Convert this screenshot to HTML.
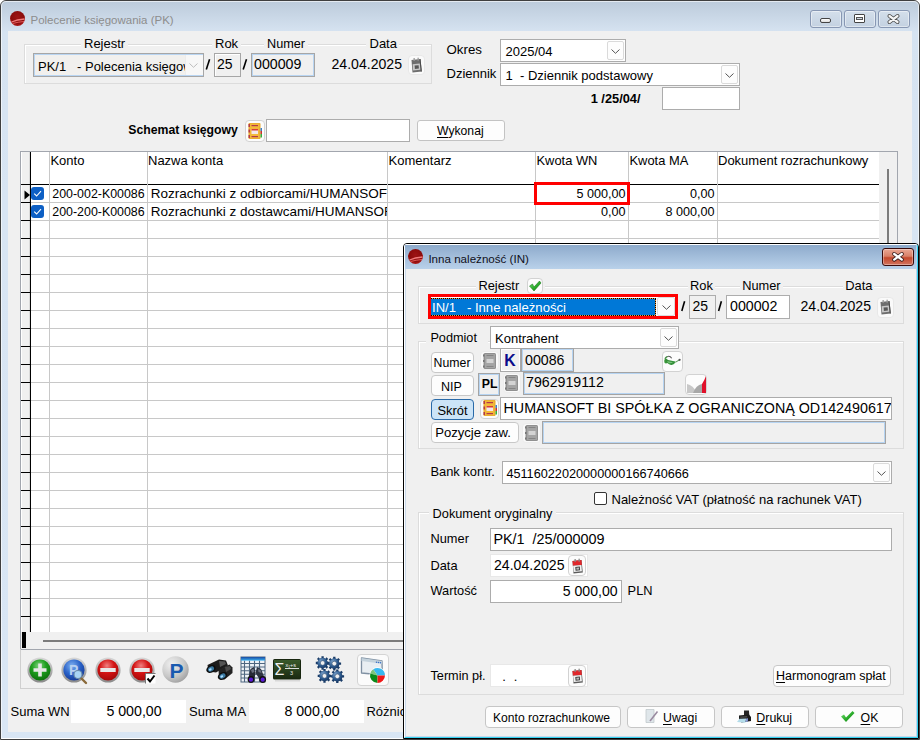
<!DOCTYPE html>
<html><head><meta charset="utf-8">
<style>
*{margin:0;padding:0;box-sizing:border-box}
html,body{width:921px;height:740px;overflow:hidden;background:#fff;font-family:"Liberation Sans",sans-serif;color:#000}
.a{position:absolute}
svg.a{overflow:visible}
.t{position:absolute;white-space:nowrap;line-height:1;font-size:13px}
.b{font-weight:bold}
.u{text-decoration:underline;text-underline-offset:2px}
</style></head><body>
<div class="a" style="left:0px;top:0px;width:920px;height:740px;border:1px solid #3f3f3f;border-radius:6px 6px 0 0;background:linear-gradient(#bccbdb,#d6e3f1 31px,#d8e5f3 200px,#d9e6f4)"></div>
<div class="a" style="left:1px;top:1px;width:918px;height:738px;border:1px solid rgba(255,255,255,.6);border-bottom-color:#fff;border-radius:5px 5px 0 0"></div>
<svg class="a" style="left:10px;top:11px" width="16" height="16" viewBox="0 0 16 16"><defs><radialGradient id="rg1" cx="50%" cy="40%" r="60%"><stop offset="0" stop-color="#9e1414"/><stop offset=".7" stop-color="#8a0c0c"/><stop offset="1" stop-color="#b01c1c"/></radialGradient></defs><circle cx="7.5" cy="7.5" r="7.5" fill="url(#rg1)"/><path d="M1.5 11 Q7 8.5 14.5 8" stroke="#f07a7a" stroke-width="1.3" fill="none"/><path d="M2.5 12.5 Q8 11 14 10.5" stroke="#e05a5a" stroke-width="1" fill="none"/></svg>
<div class="t " style="left:30.5px;top:15.00px;font-size:11.5px;color:#8d8d8d">Polecenie księgowania (PK)</div>
<div class="a" style="left:810px;top:10px;width:32px;height:18px;border:1px solid #8797b3;border-radius:3px;background:linear-gradient(#d4dfeb,#c3d1e1);box-shadow:inset 0 0 0 1px rgba(255,255,255,.45)"></div>
<div class="a" style="left:844px;top:10px;width:32px;height:18px;border:1px solid #8797b3;border-radius:3px;background:linear-gradient(#d4dfeb,#c3d1e1);box-shadow:inset 0 0 0 1px rgba(255,255,255,.45)"></div>
<div class="a" style="left:878px;top:10px;width:32px;height:18px;border:1px solid #8797b3;border-radius:3px;background:linear-gradient(#d4dfeb,#c3d1e1);box-shadow:inset 0 0 0 1px rgba(255,255,255,.45)"></div>
<div class="a" style="left:820px;top:18px;width:11px;height:5px;border:1px solid #444;border-radius:2px;background:linear-gradient(#fff,#ddd)"></div>
<div class="a" style="left:854px;top:14px;width:11px;height:9px;border:1px solid #444;border-radius:1px;background:#fff"></div>
<div class="a" style="left:856px;top:17px;width:7px;height:3px;border:1px solid #555;background:#cfd8e4"></div>
<svg class="a" style="left:887px;top:14px" width="13" height="10" viewBox="0 0 13 10"><path d="M2.5 2 L10.5 8 M10.5 2 L2.5 8" stroke="#444" stroke-width="4" stroke-linecap="round"/><path d="M2.5 2 L10.5 8 M10.5 2 L2.5 8" stroke="#f4f4f4" stroke-width="2.3" stroke-linecap="round"/></svg>
<div class="a" style="left:8px;top:31px;width:904px;height:701px;background:#f0f0f0"></div>
<div class="a" style="left:24px;top:44px;width:408px;height:40px;border:1px solid #dcdcdc;box-shadow:inset 1px 1px 0 #fff"></div>
<div class="a" style="left:81px;top:40px;width:47px;height:8px;background:#f0f0f0"></div>
<div class="a" style="left:212px;top:40px;width:29px;height:8px;background:#f0f0f0"></div>
<div class="a" style="left:264px;top:40px;width:44px;height:8px;background:#f0f0f0"></div>
<div class="a" style="left:366px;top:40px;width:33px;height:8px;background:#f0f0f0"></div>
<div class="t " style="left:84px;top:37.00px;font-size:13px;">Rejestr</div>
<div class="t " style="left:215px;top:37.00px;font-size:13px;">Rok</div>
<div class="t " style="left:267px;top:38.00px;font-size:12.7px;">Numer</div>
<div class="t " style="left:369.5px;top:37.00px;font-size:13px;">Data</div>
<div class="a" style="left:33px;top:53px;width:171px;height:24px;border:1px solid #a6a6a6;box-shadow:inset 0 0 0 1px #b9d5f2;background:#f1f0ee;overflow:hidden"><div class="t" style="left:4px;top:5.8px;font-size:13px">PK/1&nbsp;&nbsp;&nbsp;- Polecenia księgowania</div><div class="a" style="left:151px;top:1px;width:18px;height:20px;background:#f7f7f7;border-left:1px solid #ececec"></div></div>
<svg class="a" style="left:188px;top:62px" width="11" height="7"><path d="M1.5 1.5 L5.5 5.3 L9.5 1.5" fill="none" stroke="#bdbdbd" stroke-width="1"/></svg>
<svg class="a" style="left:0;top:0" width="1" height="1"><path d="M206.3 69.5 L209.6 59.3" stroke="#000" stroke-width="1.6" stroke-linecap="butt"/></svg>
<div class="a" style="left:214px;top:53px;width:27px;height:24px;border:1px solid #a6a6a6;box-shadow:inset 1px 1px 0 #fff;background:#f0f0f0"></div>
<div class="t " style="left:217px;top:57.00px;font-size:14px;">25</div>
<svg class="a" style="left:0;top:0" width="1" height="1"><path d="M243.2 69.5 L246.5 59.3" stroke="#000" stroke-width="1.6" stroke-linecap="butt"/></svg>
<div class="a" style="left:251px;top:53px;width:64px;height:24px;border:1px solid #a6a6a6;box-shadow:inset 0 0 0 1px #b9d5f2;background:#f0f0f0"></div>
<div class="t " style="left:254px;top:57.00px;font-size:14.2px;">000009</div>
<div class="t " style="left:331.5px;top:57.00px;font-size:14.1px;">24.04.2025</div>
<div class="a" style="left:408px;top:55px;width:17px;height:20px;background:#fafafa;border:1px solid #e8e8e8;border-radius:4px"></div>
<svg class="a" style="left:411px;top:58px" width="12" height="15" viewBox="0 0 12 15"><path d="M0.5 2 L9.5 1 L10.8 13.5 L1.5 14.5 Z" fill="#6e6e6e"/><path d="M9.5 1 L10.8 13.5 L9.8 13.6 L8.6 1.2 Z" fill="#4a4a4a"/><path d="M1.6 6.3 L8.8 5.6 L9.3 11.8 L2.1 12.5 Z" fill="#c8c8c8"/><path d="M3.6 7.6 L7.6 7.2 L7.9 10.6 L3.9 11 Z" fill="#585858"/><rect x="2.5" y="0" width="1.3" height="3" fill="#9a9a9a"/><rect x="6.5" y="-0.3" width="1.3" height="3" fill="#9a9a9a"/></svg>
<div class="t " style="left:446.5px;top:43.00px;font-size:13.3px;">Okres</div>
<div class="t " style="left:446.5px;top:67.00px;font-size:13px;">Dziennik</div>
<div class="a" style="left:500px;top:39px;width:126px;height:23px;border:1px solid #acacac;background:#fff"></div>
<div class="t " style="left:505.5px;top:45.00px;font-size:13px;">2025/04</div>
<div class="a" style="left:607px;top:41px;width:17px;height:19px;background:#fdfdfd;border:1px solid #dadada;border-radius:2px"></div>
<svg class="a" style="left:610px;top:48px" width="11" height="7"><path d="M1.5 1.5 L5.5 5.3 L9.5 1.5" fill="none" stroke="#555" stroke-width="1.0"/></svg>
<div class="a" style="left:500px;top:63px;width:240px;height:23px;border:1px solid #acacac;background:#fff"></div>
<div class="t " style="left:505.5px;top:69.00px;font-size:13px;">1&nbsp;&nbsp;- Dziennik podstawowy</div>
<div class="a" style="left:721px;top:65px;width:17px;height:19px;background:#fdfdfd;border:1px solid #dadada;border-radius:2px"></div>
<svg class="a" style="left:724px;top:72px" width="11" height="7"><path d="M1.5 1.5 L5.5 5.3 L9.5 1.5" fill="none" stroke="#555" stroke-width="1.0"/></svg>
<div class="t b" style="left:590.7px;top:93.00px;font-size:12.8px;">1 /25/04/</div>
<div class="a" style="left:662px;top:87px;width:78px;height:23px;border:1px solid #acacac;background:#fff"></div>
<div class="t b" style="left:128.3px;top:124.00px;font-size:12.25px;">Schemat księgowy</div>
<div class="a" style="left:245px;top:120px;width:20px;height:22px;background:#fcfcfc;border:1px solid #d2d2d2;border-radius:4px"></div>
<svg class="a" style="left:248px;top:123px" width="14" height="16" viewBox="0 0 14 16"><rect x="0.5" y="0" width="12" height="16" rx="1" fill="#e5a52a"/><rect x="1.5" y="0.5" width="10" height="15" fill="#f2b838"/><rect x="3.5" y="6" width="6.5" height="5" fill="#f4e8e8"/><rect x="3.5" y="6" width="6.5" height="1.5" fill="#d83a3a"/><rect x="3.5" y="2" width="6.5" height="1.2" fill="#b2394a"/><rect x="3.5" y="13" width="6.5" height="1.2" fill="#b2394a"/><rect x="0.5" y="1" width="1.5" height="3" fill="#b2394a"/><rect x="0.5" y="6.5" width="1.5" height="3" fill="#b2394a"/><rect x="0.5" y="12" width="1.5" height="3" fill="#b2394a"/><rect x="12.5" y="5" width="1.5" height="3" fill="#3a7ec8"/><rect x="12.5" y="8" width="1.5" height="3" fill="#c83030"/><rect x="12.5" y="11" width="1.5" height="3.5" fill="#30b040"/></svg>
<div class="a" style="left:266px;top:119px;width:144px;height:23px;border:1px solid #acacac;background:#fff"></div>
<div class="a" style="left:417px;top:120px;width:88px;height:21px;background:#fdfdfd;border:1px solid #c3c3c3;border-radius:3px"></div>
<div class="t " style="left:437px;top:125.00px;font-size:12.2px;"><span class="u">W</span>ykonaj</div>
<div class="a" style="left:20px;top:151px;width:878px;height:499px;border:1px solid #a2a6ae;background:#fff"></div>
<div class="a" style="left:21px;top:152px;width:9px;height:480px;background:#f0f0f0;border-left:1px solid #fff"></div>
<div class="a" style="left:29px;top:152px;width:1px;height:480px;background:#dadada"></div>
<div class="a" style="left:30px;top:152px;width:1px;height:480px;background:#000"></div>
<div class="a" style="left:21px;top:184px;width:858px;height:1px;background:#000"></div>
<div class="a" style="left:31px;top:202px;width:848px;height:1px;background:#c8c8c8"></div>
<div class="a" style="left:21px;top:202px;width:9px;height:1px;background:#000"></div>
<div class="a" style="left:31px;top:220px;width:848px;height:1px;background:#c8c8c8"></div>
<div class="a" style="left:21px;top:220px;width:9px;height:1px;background:#000"></div>
<div class="a" style="left:31px;top:238px;width:848px;height:1px;background:#c8c8c8"></div>
<div class="a" style="left:21px;top:238px;width:9px;height:1px;background:#000"></div>
<div class="a" style="left:31px;top:256px;width:848px;height:1px;background:#c8c8c8"></div>
<div class="a" style="left:21px;top:256px;width:9px;height:1px;background:#000"></div>
<div class="a" style="left:31px;top:274px;width:848px;height:1px;background:#c8c8c8"></div>
<div class="a" style="left:21px;top:274px;width:9px;height:1px;background:#000"></div>
<div class="a" style="left:31px;top:292px;width:848px;height:1px;background:#c8c8c8"></div>
<div class="a" style="left:21px;top:292px;width:9px;height:1px;background:#000"></div>
<div class="a" style="left:31px;top:310px;width:848px;height:1px;background:#c8c8c8"></div>
<div class="a" style="left:21px;top:310px;width:9px;height:1px;background:#000"></div>
<div class="a" style="left:31px;top:328px;width:848px;height:1px;background:#c8c8c8"></div>
<div class="a" style="left:21px;top:328px;width:9px;height:1px;background:#000"></div>
<div class="a" style="left:31px;top:346px;width:848px;height:1px;background:#c8c8c8"></div>
<div class="a" style="left:21px;top:346px;width:9px;height:1px;background:#000"></div>
<div class="a" style="left:31px;top:364px;width:848px;height:1px;background:#c8c8c8"></div>
<div class="a" style="left:21px;top:364px;width:9px;height:1px;background:#000"></div>
<div class="a" style="left:31px;top:382px;width:848px;height:1px;background:#c8c8c8"></div>
<div class="a" style="left:21px;top:382px;width:9px;height:1px;background:#000"></div>
<div class="a" style="left:31px;top:400px;width:848px;height:1px;background:#c8c8c8"></div>
<div class="a" style="left:21px;top:400px;width:9px;height:1px;background:#000"></div>
<div class="a" style="left:31px;top:418px;width:848px;height:1px;background:#c8c8c8"></div>
<div class="a" style="left:21px;top:418px;width:9px;height:1px;background:#000"></div>
<div class="a" style="left:31px;top:436px;width:848px;height:1px;background:#c8c8c8"></div>
<div class="a" style="left:21px;top:436px;width:9px;height:1px;background:#000"></div>
<div class="a" style="left:31px;top:454px;width:848px;height:1px;background:#c8c8c8"></div>
<div class="a" style="left:21px;top:454px;width:9px;height:1px;background:#000"></div>
<div class="a" style="left:31px;top:472px;width:848px;height:1px;background:#c8c8c8"></div>
<div class="a" style="left:21px;top:472px;width:9px;height:1px;background:#000"></div>
<div class="a" style="left:31px;top:490px;width:848px;height:1px;background:#c8c8c8"></div>
<div class="a" style="left:21px;top:490px;width:9px;height:1px;background:#000"></div>
<div class="a" style="left:31px;top:508px;width:848px;height:1px;background:#c8c8c8"></div>
<div class="a" style="left:21px;top:508px;width:9px;height:1px;background:#000"></div>
<div class="a" style="left:31px;top:526px;width:848px;height:1px;background:#c8c8c8"></div>
<div class="a" style="left:21px;top:526px;width:9px;height:1px;background:#000"></div>
<div class="a" style="left:31px;top:544px;width:848px;height:1px;background:#c8c8c8"></div>
<div class="a" style="left:21px;top:544px;width:9px;height:1px;background:#000"></div>
<div class="a" style="left:31px;top:562px;width:848px;height:1px;background:#c8c8c8"></div>
<div class="a" style="left:21px;top:562px;width:9px;height:1px;background:#000"></div>
<div class="a" style="left:31px;top:580px;width:848px;height:1px;background:#c8c8c8"></div>
<div class="a" style="left:21px;top:580px;width:9px;height:1px;background:#000"></div>
<div class="a" style="left:31px;top:598px;width:848px;height:1px;background:#c8c8c8"></div>
<div class="a" style="left:21px;top:598px;width:9px;height:1px;background:#000"></div>
<div class="a" style="left:31px;top:616px;width:848px;height:1px;background:#c8c8c8"></div>
<div class="a" style="left:21px;top:616px;width:9px;height:1px;background:#000"></div>
<div class="a" style="left:49px;top:152px;width:1px;height:480px;background:#c8c8c8"></div>
<div class="a" style="left:147px;top:152px;width:1px;height:480px;background:#c8c8c8"></div>
<div class="a" style="left:387px;top:152px;width:1px;height:480px;background:#c8c8c8"></div>
<div class="a" style="left:535px;top:152px;width:1px;height:480px;background:#c8c8c8"></div>
<div class="a" style="left:628px;top:152px;width:1px;height:480px;background:#c8c8c8"></div>
<div class="a" style="left:717px;top:152px;width:1px;height:480px;background:#c8c8c8"></div>
<div class="a" style="left:879px;top:152px;width:18px;height:480px;background:#f0f0f0"></div>
<div class="a" style="left:887px;top:169px;width:2px;height:463px;background:#7c7c7c"></div>
<div class="a" style="left:21px;top:632px;width:876px;height:17px;background:#f0f0f0"></div>
<div class="a" style="left:22px;top:632px;width:4px;height:16px;background:#000"></div>
<div class="a" style="left:43px;top:640px;width:854px;height:2px;background:#7c7c7c"></div>
<div class="t " style="left:50.4px;top:154.00px;font-size:13px;">Konto</div>
<div class="t " style="left:148px;top:154.00px;font-size:13px;">Nazwa konta</div>
<div class="t " style="left:388.6px;top:154.00px;font-size:13px;">Komentarz</div>
<div class="t " style="left:536.5px;top:155.00px;font-size:12.9px;">Kwota WN</div>
<div class="t " style="left:629.5px;top:155.00px;font-size:12.9px;">Kwota MA</div>
<div class="t " style="left:718px;top:154.00px;font-size:13px;">Dokument rozrachunkowy</div>
<div class="a" style="left:31px;top:187px;width:13px;height:13px;border-radius:3px;background:#0d5fc4"></div>
<svg class="a" style="left:31px;top:187px" width="13" height="13" viewBox="0 0 13 13"><path d="M3.2 6.6 L5.6 9 L10 4.2" fill="none" stroke="#fff" stroke-width="1.1"/></svg>
<div class="t " style="left:52.3px;top:188.00px;font-size:12.4px;">200-002-K00086</div>
<div class="a" style="left:148px;top:184px;width:239px;height:18px;overflow:hidden"><div class="t" style="left:2.7px;top:3px;font-size:13.5px">Rozrachunki z odbiorcami/HUMANSOFT BI</div></div>
<div class="t" style="left:536px;top:188px;width:89.5px;text-align:right;font-size:12.6px">5 000,00</div>
<div class="t" style="left:629px;top:188px;width:85.6px;text-align:right;font-size:12.6px">0,00</div>
<div class="a" style="left:31px;top:205px;width:13px;height:13px;border-radius:3px;background:#0d5fc4"></div>
<svg class="a" style="left:31px;top:205px" width="13" height="13" viewBox="0 0 13 13"><path d="M3.2 6.6 L5.6 9 L10 4.2" fill="none" stroke="#fff" stroke-width="1.1"/></svg>
<div class="t " style="left:52.3px;top:206.00px;font-size:12.4px;">200-200-K00086</div>
<div class="a" style="left:148px;top:202px;width:239px;height:18px;overflow:hidden"><div class="t" style="left:2.7px;top:3px;font-size:13.5px">Rozrachunki z dostawcami/HUMANSOFT BI</div></div>
<div class="t" style="left:536px;top:206px;width:89.5px;text-align:right;font-size:12.6px">0,00</div>
<div class="t" style="left:629px;top:206px;width:85.6px;text-align:right;font-size:12.6px">8 000,00</div>
<svg class="a" style="left:24px;top:190px" width="7" height="10" viewBox="0 0 7 10"><path d="M0.5 0.5 L6 5 L0.5 9.5 Z" fill="#000"/></svg>
<div class="a" style="left:534px;top:182px;width:96px;height:23px;border:3px solid #ff0000"></div>
<div class="a" style="left:20px;top:649px;width:878px;height:40px;border:1px solid #cfcfcf;border-top:none"></div>
<svg class="a" style="left:27px;top:657px" width="26" height="26" viewBox="0 0 26 26"><defs><radialGradient id="gp" cx="45%" cy="30%" r="75%"><stop offset="0" stop-color="#7fd47f"/><stop offset=".45" stop-color="#1e9e1e"/><stop offset="1" stop-color="#0a6a0a"/></radialGradient><linearGradient id="ring" x1="0" y1="0" x2="0" y2="1"><stop offset="0" stop-color="#d8d8d8"/><stop offset="1" stop-color="#8a8a8a"/></linearGradient></defs><circle cx="13" cy="13" r="12.6" fill="url(#ring)"/><circle cx="13" cy="13" r="10.6" fill="url(#gp)"/><path d="M13 6.5 V19.5 M6.5 13 H19.5" stroke="#e6e6e6" stroke-width="3.6"/></svg>
<svg class="a" style="left:61px;top:657px" width="28" height="28" viewBox="0 0 28 28"><defs><radialGradient id="bp" cx="40%" cy="30%" r="80%"><stop offset="0" stop-color="#7fb0f0"/><stop offset=".5" stop-color="#2a62c8"/><stop offset="1" stop-color="#10308a"/></radialGradient></defs><circle cx="13" cy="13" r="12.6" fill="url(#ring)"/><circle cx="13" cy="13" r="10.6" fill="url(#bp)"/><text x="8" y="18" font-family="Liberation Sans" font-weight="bold" font-size="14" fill="#b8d0f0">P</text><path d="M19 20 L25 26" stroke="#8a6a3a" stroke-width="2.4" stroke-linecap="round"/><circle cx="17" cy="17.5" r="4" fill="#a8d4f4" stroke="#6a8aa8" stroke-width="1.2"/></svg>
<svg class="a" style="left:95px;top:657px" width="26" height="26" viewBox="0 0 26 26"><defs><radialGradient id="rm" cx="45%" cy="30%" r="75%"><stop offset="0" stop-color="#f08080"/><stop offset=".45" stop-color="#d41414"/><stop offset="1" stop-color="#a00808"/></radialGradient></defs><circle cx="13" cy="13" r="12.6" fill="url(#ring)"/><circle cx="13" cy="13" r="10.6" fill="url(#rm)"/><rect x="5.3" y="11" width="15.4" height="4" fill="#e8e8e8"/></svg>
<svg class="a" style="left:129px;top:657px" width="28" height="28" viewBox="0 0 28 28"><circle cx="13" cy="13" r="12.6" fill="url(#ring)"/><circle cx="13" cy="13" r="10.6" fill="url(#rm)"/><rect x="5.3" y="11" width="15.4" height="4" fill="#e8e8e8"/><path d="M16.5 26.5 V16.5 H26.5" fill="none" stroke="#777" stroke-width="1"/><rect x="17" y="17" width="9.5" height="9.5" fill="#fff"/><path d="M18.5 21.5 L21 24.5 L25.5 18.5" fill="none" stroke="#000" stroke-width="2"/></svg>
<svg class="a" style="left:162px;top:656px" width="27" height="27" viewBox="0 0 27 27"><defs><radialGradient id="gg" cx="35%" cy="30%" r="80%"><stop offset="0" stop-color="#f0f0f0"/><stop offset=".6" stop-color="#c8c8c8"/><stop offset="1" stop-color="#9a9a9a"/></radialGradient></defs><circle cx="13.5" cy="13.5" r="13.2" fill="url(#gg)"/><text x="7.5" y="21.5" font-family="Liberation Sans" font-weight="bold" font-size="21" fill="#1a5ab0">P</text></svg>
<svg class="a" style="left:205px;top:659px" width="29" height="22" viewBox="0 0 29 22"><path d="M2.5 6 L14 0.5 L21 1.5 L23 6.5 L11 13.5 L3.5 12.5 Z" fill="#1c1c1c"/><path d="M13.5 11 L24.5 5.5 L27.5 8.5 L27.5 14 L19.5 20.5 L14 19.5 Z" fill="#222"/><path d="M14 2 L20 2.5 L21 5 L15 8 Z" fill="#555"/><path d="M20 8 L25 7 L26 10 L21 13 Z" fill="#4a4a4a"/><ellipse cx="6" cy="10" rx="5" ry="3.6" transform="rotate(-28 6 10)" fill="#0e0e0e"/><ellipse cx="6" cy="10" rx="3.2" ry="2.3" transform="rotate(-28 6 10)" fill="#3a78a0"/><ellipse cx="5.3" cy="10.5" rx="1.5" ry="1" transform="rotate(-28 5.3 10.5)" fill="#a8dcff"/><ellipse cx="17.5" cy="17" rx="5" ry="3.6" transform="rotate(-28 17.5 17)" fill="#0e0e0e"/><ellipse cx="17.5" cy="17" rx="3.2" ry="2.3" transform="rotate(-28 17.5 17)" fill="#3a78a0"/><ellipse cx="16.8" cy="17.5" rx="1.5" ry="1" transform="rotate(-28 16.8 17.5)" fill="#a8dcff"/></svg>
<svg class="a" style="left:240px;top:656px" width="27" height="28" viewBox="0 0 27 28"><defs><linearGradient id="gh" x1="0" y1="0" x2="0" y2="1"><stop offset="0" stop-color="#1a4aa0"/><stop offset="1" stop-color="#3ab0f0"/></linearGradient></defs><rect x="1" y="1" width="24" height="25" fill="#eef2f6"/><path d="M4.5 4.5 V26 M9.5 4.5 V26 M14.5 4.5 V26 M19.5 4.5 V26 M1 7.5 H25 M1 11 H25 M1 14.7 H25 M1 18.3 H25 M1 22 H25" stroke="#4e6680" stroke-width="1.1"/><rect x="1" y="1" width="24" height="25" fill="none" stroke="#4e6680" stroke-width="1"/><rect x="1" y="1" width="24" height="3.6" fill="url(#gh)"/><path d="M8 24 L10.5 13 L14 11 L15.5 17 L14 24 Z" fill="#262a36"/><path d="M15.5 17 L17 11 L21 13 L25.5 24 L20 24 Z" fill="#2e3442"/><path d="M11 14 L13.5 12.5 L14.5 16 L12 17 Z" fill="#6a7080"/><path d="M18 13 L20.5 14 L21.5 17 L18.5 16 Z" fill="#6a7080"/><circle cx="11" cy="23.5" r="3.4" fill="#111"/><circle cx="11" cy="23.7" r="2.1" fill="#5a1ad8"/><circle cx="22.7" cy="23.5" r="3.4" fill="#111"/><circle cx="22.7" cy="23.7" r="2.1" fill="#5a1ad8"/></svg>
<svg class="a" style="left:273px;top:659px" width="29" height="24" viewBox="0 0 29 24"><defs><linearGradient id="cb" x1="0" y1="0" x2="0" y2="1"><stop offset="0" stop-color="#3a5a2a"/><stop offset="1" stop-color="#1a2a12"/></linearGradient></defs><rect x="0" y="0" width="28" height="20.5" rx="1.5" fill="#18260f"/><rect x="1" y="1" width="26" height="18.5" fill="url(#cb)"/><rect x="2" y="21" width="25" height="1.5" fill="#d8d8d8"/><text x="1.5" y="16" font-family="Liberation Sans" font-size="16" fill="#f0f0f0">Σ</text><path d="M12 9.5 H26" stroke="#eee" stroke-width=".9"/><text x="12.5" y="8" font-family="Liberation Sans" font-size="5.5" fill="#eee">x₁+s</text><text x="17" y="15.5" font-family="Liberation Sans" font-size="5.5" fill="#eee">3</text></svg>
<svg class="a" style="left:315px;top:655px" width="30" height="30" viewBox="0 0 30 30"><defs><radialGradient id="gr" cx="35%" cy="30%" r="75%"><stop offset="0" stop-color="#7aa0c8"/><stop offset=".6" stop-color="#2e5c90"/><stop offset="1" stop-color="#1a3a66"/></radialGradient></defs><path d="M14.40 6.83 L14.40 9.17 L12.58 9.13 L11.92 10.72 L13.23 11.98 L11.58 13.63 L10.32 12.32 L8.73 12.98 L8.77 14.80 L6.43 14.80 L6.47 12.98 L4.88 12.32 L3.62 13.63 L1.97 11.98 L3.28 10.72 L2.62 9.13 L0.80 9.17 L0.80 6.83 L2.62 6.87 L3.28 5.28 L1.97 4.02 L3.62 2.37 L4.88 3.68 L6.47 3.02 L6.43 1.20 L8.77 1.20 L8.73 3.02 L10.32 3.68 L11.58 2.37 L13.23 4.02 L11.92 5.28 L12.58 6.87 Z" fill="#1a3c68"/><circle cx="7.6" cy="8" r="5.11" fill="url(#gr)"/><circle cx="7.6" cy="8" r="2.35" fill="#f0f0f0" stroke="#2a4a70" stroke-width=".6"/><path d="M26.10 7.43 L26.10 9.77 L24.28 9.73 L23.62 11.32 L24.93 12.58 L23.28 14.23 L22.02 12.92 L20.43 13.58 L20.47 15.40 L18.13 15.40 L18.17 13.58 L16.58 12.92 L15.32 14.23 L13.67 12.58 L14.98 11.32 L14.32 9.73 L12.50 9.77 L12.50 7.43 L14.32 7.47 L14.98 5.88 L13.67 4.62 L15.32 2.97 L16.58 4.28 L18.17 3.62 L18.13 1.80 L20.47 1.80 L20.43 3.62 L22.02 4.28 L23.28 2.97 L24.93 4.62 L23.62 5.88 L24.28 7.47 Z" fill="#1a3c68"/><circle cx="19.3" cy="8.6" r="5.11" fill="url(#gr)"/><circle cx="19.3" cy="8.6" r="2.35" fill="#f0f0f0" stroke="#2a4a70" stroke-width=".6"/><path d="M16.30 19.73 L16.30 22.07 L14.48 22.03 L13.82 23.62 L15.13 24.88 L13.48 26.53 L12.22 25.22 L10.63 25.88 L10.67 27.70 L8.33 27.70 L8.37 25.88 L6.78 25.22 L5.52 26.53 L3.87 24.88 L5.18 23.62 L4.52 22.03 L2.70 22.07 L2.70 19.73 L4.52 19.77 L5.18 18.18 L3.87 16.92 L5.52 15.27 L6.78 16.58 L8.37 15.92 L8.33 14.10 L10.67 14.10 L10.63 15.92 L12.22 16.58 L13.48 15.27 L15.13 16.92 L13.82 18.18 L14.48 19.77 Z" fill="#1a3c68"/><circle cx="9.5" cy="20.9" r="5.11" fill="url(#gr)"/><circle cx="9.5" cy="20.9" r="2.35" fill="#f0f0f0" stroke="#2a4a70" stroke-width=".6"/><path d="M29.10 20.13 L29.10 22.47 L27.28 22.43 L26.62 24.02 L27.93 25.28 L26.28 26.93 L25.02 25.62 L23.43 26.28 L23.47 28.10 L21.13 28.10 L21.17 26.28 L19.58 25.62 L18.32 26.93 L16.67 25.28 L17.98 24.02 L17.32 22.43 L15.50 22.47 L15.50 20.13 L17.32 20.17 L17.98 18.58 L16.67 17.32 L18.32 15.67 L19.58 16.98 L21.17 16.32 L21.13 14.50 L23.47 14.50 L23.43 16.32 L25.02 16.98 L26.28 15.67 L27.93 17.32 L26.62 18.58 L27.28 20.17 Z" fill="#1a3c68"/><circle cx="22.3" cy="21.3" r="5.11" fill="url(#gr)"/><circle cx="22.3" cy="21.3" r="2.35" fill="#f0f0f0" stroke="#2a4a70" stroke-width=".6"/></svg>
<div class="a" style="left:357px;top:654px;width:32px;height:32px;background:#fbfbfb;border:1px solid #d4d4d4;border-radius:4px"></div>
<svg class="a" style="left:359px;top:656px" width="28" height="28" viewBox="0 0 28 28"><path d="M2.5 2 L23 5 L23.3 19 L2.5 17 Z" fill="#e9eef2" stroke="#7f90a2" stroke-width="1.3" stroke-linejoin="round"/><path d="M2.5 2 L23 5 L23 7.8 L2.5 5 Z" fill="#c4d2dc"/><circle cx="17.5" cy="6.2" r=".75" fill="#3a70c8"/><circle cx="19.5" cy="6.5" r=".75" fill="#3a70c8"/><circle cx="21.5" cy="6.8" r=".75" fill="#3a70c8"/><circle cx="18.5" cy="19.5" r="8.2" fill="#fff"/><path d="M18.5 19.5 L26 19.5 A7.5 7.5 0 0 0 14.2 13.36 Z" fill="#38b8f0"/><path d="M18.5 19.5 L14.2 13.36 A7.5 7.5 0 0 0 11.25 17.56 Z" fill="#7cc47c"/><path d="M18.5 19.5 L11.25 17.56 A7.5 7.5 0 0 0 18.5 27 Z" fill="#0a8a1a"/><path d="M18.5 19.5 L18.5 27 A7.5 7.5 0 0 0 26 19.5 Z" fill="#f01818"/></svg>
<div class="t " style="left:10.5px;top:705.00px;font-size:13px;">Suma WN</div>
<div class="a" style="left:71px;top:700px;width:115px;height:23px;background:#fff"></div>
<div class="t" style="left:76.5px;top:704.00px;width:115px;text-align:center;font-size:14.2px">5 000,00</div>
<div class="t " style="left:189px;top:705.00px;font-size:13px;">Suma MA</div>
<div class="a" style="left:249px;top:700px;width:115px;height:23px;background:#fff"></div>
<div class="t" style="left:254.5px;top:704.00px;width:115px;text-align:center;font-size:14.2px">8 000,00</div>
<div class="t " style="left:366.4px;top:705.00px;font-size:13px;">Różnica</div>
<div class="a" style="left:403px;top:243px;width:516px;height:496px;border:1px solid #000;border-radius:4px 4px 0 0;background:#b9d1ea"></div>
<div class="a" style="left:404px;top:244px;width:514px;height:494px;border-top:1px solid #fff;border-left:1px solid #fff;border-right:1px solid #35d3f2;border-bottom:1px solid #35d3f2;border-radius:3px 3px 0 0"></div>
<div class="a" style="left:405px;top:245px;width:511px;height:24px;background:linear-gradient(#8eabcc,#b9d1ea)"></div>
<div class="a" style="left:405px;top:269px;width:511px;height:468px;background:#c8d8ea"></div>
<div class="a" style="left:406px;top:269px;width:510px;height:467px;background:#f0f0f0"></div>
<svg class="a" style="left:408px;top:249px" width="16" height="16" viewBox="0 0 16 16"><circle cx="7.5" cy="7.5" r="7.5" fill="url(#rg1)"/><path d="M1.5 11 Q7 8.5 14.5 8" stroke="#f07a7a" stroke-width="1.3" fill="none"/><path d="M2.5 12.5 Q8 11 14 10.5" stroke="#e05a5a" stroke-width="1" fill="none"/></svg>
<div class="t " style="left:428.4px;top:253.00px;font-size:11.6px;color:#101020">Inna należność (IN)</div>
<div class="a" style="left:882px;top:248px;width:32px;height:18px;border:1px solid #3a0c0c;border-radius:3px;background:linear-gradient(#eaa894,#d98068 45%,#c4482c 55%,#d27560);box-shadow:inset 0 0 0 1px rgba(255,255,255,.35)"></div>
<svg class="a" style="left:891px;top:251px" width="14" height="12" viewBox="0 0 14 12"><path d="M3.2 3 L10.8 8.6 M10.8 3 L3.2 8.6" stroke="#3a2020" stroke-width="4" stroke-linecap="round"/><path d="M3.2 3 L10.8 8.6 M10.8 3 L3.2 8.6" stroke="#fff" stroke-width="2.3" stroke-linecap="round"/></svg>
<div class="a" style="left:418px;top:286px;width:486px;height:38px;border:1px solid #dcdcdc;box-shadow:inset 1px 1px 0 #fff"></div>
<div class="a" style="left:476px;top:282px;width:69px;height:8px;background:#f0f0f0"></div>
<div class="a" style="left:688px;top:282px;width:27px;height:8px;background:#f0f0f0"></div>
<div class="a" style="left:740px;top:282px;width:43px;height:8px;background:#f0f0f0"></div>
<div class="a" style="left:843px;top:282px;width:31px;height:8px;background:#f0f0f0"></div>
<div class="t " style="left:478.4px;top:280.00px;font-size:12.9px;">Rejestr</div>
<div class="a" style="left:527px;top:278px;width:16px;height:16px;background:#fcfcfc;border:1px solid #d2d2d2;border-radius:4px"></div>
<svg class="a" style="left:528px;top:279px" width="14" height="14" viewBox="0 0 14 14"><defs><linearGradient id="gc" x1="0" y1="0" x2="1" y2="1"><stop offset="0" stop-color="#80e880"/><stop offset=".5" stop-color="#30b030"/><stop offset="1" stop-color="#0a7a0a"/></linearGradient></defs><path d="M1.5 7 L4.5 5 L6 8 L11.5 2 L13 4 L6 12 Z" fill="url(#gc)" stroke="#0a6a0a" stroke-width=".5"/></svg>
<div class="t " style="left:690px;top:280.00px;font-size:12.9px;">Rok</div>
<div class="t " style="left:742.2px;top:280.00px;font-size:12.8px;">Numer</div>
<div class="t " style="left:845.3px;top:280.00px;font-size:12.9px;">Data</div>
<div class="a" style="left:428px;top:294px;width:250px;height:25px;border:3px solid #f00;background:#fff"></div>
<div class="a" style="left:431px;top:298px;width:225px;height:18px;background:linear-gradient(#0078d7,#0078d7) padding-box,#f39a3a border-box;border:1px dotted #000;border-left:none"></div>
<div class="t " style="left:432px;top:301.00px;font-size:13.1px;color:#fff">IN/1&nbsp;&nbsp;&nbsp;- Inne należności</div>
<div class="a" style="left:657px;top:297px;width:18px;height:19px;background:#fdfdfd;border:1px solid #dcdcdc;border-radius:2px"></div>
<svg class="a" style="left:660.5px;top:304px" width="11" height="7"><path d="M1.5 1.5 L5.5 5.3 L9.5 1.5" fill="none" stroke="#555" stroke-width="1.0"/></svg>
<svg class="a" style="left:0;top:0" width="1" height="1"><path d="M681.8 311 L684.6 301.3" stroke="#000" stroke-width="1.6" stroke-linecap="butt"/></svg>
<div class="a" style="left:689px;top:295px;width:27px;height:24px;border:1px solid #adadad;background:#f0f0f0"></div>
<div class="t " style="left:692.5px;top:299.00px;font-size:14px;">25</div>
<svg class="a" style="left:0;top:0" width="1" height="1"><path d="M718.6 311 L721.4 301.3" stroke="#000" stroke-width="1.6" stroke-linecap="butt"/></svg>
<div class="a" style="left:726px;top:295px;width:64px;height:24px;border:1px solid #adadad;background:#fff"></div>
<div class="t " style="left:730px;top:299.00px;font-size:14.2px;">000002</div>
<div class="t " style="left:800.5px;top:299.00px;font-size:14.1px;">24.04.2025</div>
<div class="a" style="left:877px;top:297px;width:17px;height:21px;background:#fafafa;border:1px solid #e8e8e8;border-radius:4px"></div>
<svg class="a" style="left:880px;top:299.5px" width="12" height="15" viewBox="0 0 12 15"><path d="M0.5 2 L9.5 1 L10.8 13.5 L1.5 14.5 Z" fill="#6e6e6e"/><path d="M9.5 1 L10.8 13.5 L9.8 13.6 L8.6 1.2 Z" fill="#4a4a4a"/><path d="M1.6 6.3 L8.8 5.6 L9.3 11.8 L2.1 12.5 Z" fill="#c8c8c8"/><path d="M3.6 7.6 L7.6 7.2 L7.9 10.6 L3.9 11 Z" fill="#585858"/><rect x="2.5" y="0" width="1.3" height="3" fill="#9a9a9a"/><rect x="6.5" y="-0.3" width="1.3" height="3" fill="#9a9a9a"/></svg>
<div class="a" style="left:418px;top:341px;width:486px;height:108px;border:1px solid #dcdcdc;box-shadow:inset 1px 1px 0 #fff"></div>
<div class="a" style="left:426px;top:336px;width:62px;height:8px;background:#f0f0f0"></div>
<div class="t " style="left:430.4px;top:332.00px;font-size:12.7px;">Podmiot</div>
<div class="a" style="left:490px;top:326px;width:189px;height:23px;border:1px solid #acacac;background:#fff"></div>
<div class="t " style="left:495px;top:332.00px;font-size:13px;">Kontrahent</div>
<div class="a" style="left:660px;top:328px;width:17px;height:19px;background:#fdfdfd;border:1px solid #dadada;border-radius:2px"></div>
<svg class="a" style="left:663px;top:335px" width="11" height="7"><path d="M1.5 1.5 L5.5 5.3 L9.5 1.5" fill="none" stroke="#555" stroke-width="1.0"/></svg>
<div class="a" style="left:431px;top:352px;width:43px;height:21px;background:#fdfdfd;border:1px solid #c8c8c8;border-radius:4px;"></div>
<div class="t " style="left:433.6px;top:357.00px;font-size:12.3px;">Numer</div>
<div class="a" style="left:431px;top:375px;width:43px;height:21px;background:#fdfdfd;border:1px solid #c8c8c8;border-radius:4px;"></div>
<div class="t " style="left:441px;top:381.00px;font-size:12.5px;">NIP</div>
<div class="a" style="left:431px;top:399px;width:43px;height:21px;background:#fdfdfd;border:1px solid #c8c8c8;border-radius:4px;background:#cce4f7;border-color:#2a6aa8"></div>
<div class="t " style="left:437.4px;top:405.00px;font-size:12.9px;">Skrót</div>
<div class="a" style="left:431px;top:422px;width:88px;height:21px;background:#fdfdfd;border:1px solid #c8c8c8;border-radius:4px;"></div>
<div class="t " style="left:435.2px;top:426.00px;font-size:13.1px;">Pozycje zaw.</div>
<div class="a" style="left:480px;top:351px;width:19px;height:19px;background:#fafafa;border:1px solid #ececec;border-radius:4px"></div>
<svg class="a" style="left:483px;top:353px" width="14" height="16" viewBox="0 0 14 16"><rect x="0.5" y="0" width="12.5" height="16" rx="1.5" fill="#909090"/><rect x="2" y="1" width="10" height="14" fill="#a4a4a4"/><rect x="3.5" y="6" width="7" height="4" fill="#d4d4d4"/><rect x="3.5" y="2" width="7" height="1" fill="#858585"/><rect x="3.5" y="13" width="7" height="1" fill="#858585"/><rect x="0" y="1.5" width="1.5" height="2" fill="#777"/><rect x="0" y="7" width="1.5" height="2" fill="#777"/><rect x="0" y="12.5" width="1.5" height="2" fill="#777"/></svg>
<div class="a" style="left:500px;top:348px;width:21px;height:24px;border:1px solid #a8a8a8;box-shadow:inset 0 0 0 1px #fff;background:#f0f0f0"></div>
<div class="t b" style="left:504.2px;top:353.00px;font-size:15.8px;color:#0a0a8a">K</div>
<div class="a" style="left:521px;top:348px;width:53px;height:24px;border:1px solid #a4a4a4;box-shadow:inset 0 0 0 1px #b6d4f2;background:#f0f0f0"></div>
<div class="t " style="left:525px;top:353.00px;font-size:14.2px;">00086</div>
<div class="a" style="left:662px;top:351px;width:21px;height:21px;background:#fcfcfc;border:1px solid #d2d2d2;border-radius:4px"></div>
<svg class="a" style="left:663px;top:355px" width="18" height="12" viewBox="0 0 18 12"><path d="M1.9 3.6 Q6 -0.8 8.7 3.3" stroke="#5a5a5a" stroke-width="1.1" fill="none"/><path d="M1.9 3.6 Q3 2.2 4.5 1.6" stroke="#4a9a4a" stroke-width="1.1" fill="none"/><ellipse cx="3" cy="5.9" rx="1.8" ry="2.5" fill="#3a963a"/><path d="M2.6 4.6 L12.3 6.6 Q11.6 10.2 8 9.9 Q4 9.6 2.6 4.6 Z" fill="#35913a"/><path d="M4 6 L10 7.2 Q8 8.6 5.5 8 Z" fill="#8ad08a" opacity=".8"/><path d="M12.2 7.4 L16.4 4.9" stroke="#5a9a5a" stroke-width="1.1"/><circle cx="16.6" cy="4.8" r="1.1" fill="#555"/></svg>
<div class="a" style="left:478px;top:373px;width:22px;height:23px;border:1px solid #a4a4a4;box-shadow:inset 0 0 0 1px #b6d4f2;background:#f0f0f0"></div>
<div class="t b" style="left:481.7px;top:378.00px;font-size:12.3px;">PL</div>
<div class="a" style="left:503px;top:373px;width:18px;height:20px;background:#fafafa;border:1px solid #ececec;border-radius:4px"></div>
<svg class="a" style="left:505px;top:375px" width="14" height="16" viewBox="0 0 14 16"><rect x="0.5" y="0" width="12.5" height="16" rx="1.5" fill="#909090"/><rect x="2" y="1" width="10" height="14" fill="#a4a4a4"/><rect x="3.5" y="6" width="7" height="4" fill="#d4d4d4"/><rect x="3.5" y="2" width="7" height="1" fill="#858585"/><rect x="3.5" y="13" width="7" height="1" fill="#858585"/><rect x="0" y="1.5" width="1.5" height="2" fill="#777"/><rect x="0" y="7" width="1.5" height="2" fill="#777"/><rect x="0" y="12.5" width="1.5" height="2" fill="#777"/></svg>
<div class="a" style="left:523px;top:372px;width:142px;height:23px;border:1px solid #a4a4a4;box-shadow:inset 0 0 0 1px #b6d4f2;background:#f0f0f0"></div>
<div class="t " style="left:526px;top:375.00px;font-size:14.2px;">7962919112</div>
<div class="a" style="left:685px;top:374px;width:22px;height:21px;background:#fcfcfc;border:1px solid #d2d2d2;border-radius:4px"></div>
<svg class="a" style="left:686px;top:375px" width="20" height="19" viewBox="0 0 20 19"><path d="M1 9 Q7 10 11 18 L1 18 Z" fill="#c8c8c8"/><path d="M16 9 Q10 10 7 18 L16 18 Z" fill="#a8a8a8"/><path d="M16 9 Q19 4 20 1 L20 18 L16 18 Z" fill="#e0102a"/></svg>
<div class="a" style="left:480px;top:399px;width:19px;height:20px;background:#fcfcfc;border:1px solid #d2d2d2;border-radius:4px"></div>
<svg class="a" style="left:483px;top:400px" width="14" height="16" viewBox="0 0 14 16"><rect x="0.5" y="0" width="12" height="16" rx="1" fill="#e5a52a"/><rect x="1.5" y="0.5" width="10" height="15" fill="#f2b838"/><rect x="3.5" y="6" width="6.5" height="5" fill="#f4e8e8"/><rect x="3.5" y="6" width="6.5" height="1.5" fill="#d83a3a"/><rect x="3.5" y="2" width="6.5" height="1.2" fill="#b2394a"/><rect x="3.5" y="13" width="6.5" height="1.2" fill="#b2394a"/><rect x="0.5" y="1" width="1.5" height="3" fill="#b2394a"/><rect x="0.5" y="6.5" width="1.5" height="3" fill="#b2394a"/><rect x="0.5" y="12" width="1.5" height="3" fill="#b2394a"/><rect x="12.5" y="5" width="1.5" height="3" fill="#3a7ec8"/><rect x="12.5" y="8" width="1.5" height="3" fill="#c83030"/><rect x="12.5" y="11" width="1.5" height="3.5" fill="#30b040"/></svg>
<div class="a" style="left:500px;top:397px;width:392px;height:23px;border:1px solid #acacac;background:#fff;overflow:hidden"><div class="t" style="left:2.5px;top:3px;font-size:14.3px">HUMANSOFT BI SPÓŁKA Z OGRANICZONĄ OD142490617 ODPOWIEDZIALNOŚCIĄ</div></div>
<div class="a" style="left:522px;top:423px;width:19px;height:20px;background:#fafafa;border:1px solid #ececec;border-radius:4px"></div>
<svg class="a" style="left:525px;top:425px" width="14" height="16" viewBox="0 0 14 16"><rect x="0.5" y="0" width="12.5" height="16" rx="1.5" fill="#909090"/><rect x="2" y="1" width="10" height="14" fill="#a4a4a4"/><rect x="3.5" y="6" width="7" height="4" fill="#d4d4d4"/><rect x="3.5" y="2" width="7" height="1" fill="#858585"/><rect x="3.5" y="13" width="7" height="1" fill="#858585"/><rect x="0" y="1.5" width="1.5" height="2" fill="#777"/><rect x="0" y="7" width="1.5" height="2" fill="#777"/><rect x="0" y="12.5" width="1.5" height="2" fill="#777"/></svg>
<div class="a" style="left:542px;top:421px;width:344px;height:23px;border:1px solid #a4a4a4;box-shadow:inset 0 0 0 1px #b6d4f2;background:#f0f0f0"></div>
<div class="t " style="left:430.4px;top:466.00px;font-size:12.9px;">Bank kontr.</div>
<div class="a" style="left:502px;top:461px;width:390px;height:23px;border:1px solid #acacac;background:#fff"></div>
<div class="t " style="left:506.4px;top:468.00px;font-size:12.7px;">45116022020000000166740666</div>
<div class="a" style="left:873px;top:463px;width:17px;height:19px;background:#fdfdfd;border:1px solid #dadada;border-radius:2px"></div>
<svg class="a" style="left:876px;top:470px" width="11" height="7"><path d="M1.5 1.5 L5.5 5.3 L9.5 1.5" fill="none" stroke="#555" stroke-width="1.0"/></svg>
<div class="a" style="left:594px;top:492px;width:13px;height:13px;border:1px solid #333;border-radius:2px;background:#fff"></div>
<div class="t " style="left:611.5px;top:493.00px;font-size:13px;">Należność VAT (płatność na rachunek VAT)</div>
<div class="a" style="left:418px;top:512px;width:486px;height:183px;border:1px solid #dcdcdc;box-shadow:inset 1px 1px 0 #fff"></div>
<div class="a" style="left:429px;top:508px;width:127px;height:8px;background:#f0f0f0"></div>
<div class="t " style="left:432.6px;top:508.00px;font-size:12.75px;">Dokument oryginalny</div>
<div class="t " style="left:430.5px;top:533.00px;font-size:12.8px;">Numer</div>
<div class="a" style="left:490px;top:528px;width:402px;height:23px;border:1px solid #acacac;background:#fff"></div>
<div class="t " style="left:493.4px;top:532.00px;font-size:14.4px;">PK/1&nbsp;&nbsp;/25/000009</div>
<div class="t " style="left:430.5px;top:560.00px;font-size:12.8px;">Data</div>
<div class="a" style="left:490px;top:554px;width:98px;height:23px;border:1px solid #e8e8e8;background:#fff"></div>
<div class="t " style="left:494px;top:558.00px;font-size:14.1px;">24.04.2025</div>
<div class="a" style="left:568px;top:555px;width:18px;height:21px;background:#fcfcfc;border:1px solid #d2d2d2;border-radius:4px"></div>
<svg class="a" style="left:571.5px;top:558.5px" width="12" height="15" viewBox="0 0 12 15"><path d="M0.5 2 L9.5 1 L10.8 13.5 L1.5 14.5 Z" fill="#5a5a5a"/><path d="M0.5 2 L9.5 1 L9.9 6 L0.9 6.8 Z" fill="#e0282c"/><path d="M1.1 6.8 L9.4 6 L9.9 12.2 L1.7 13 Z" fill="#f2f2f2"/><path d="M3.3 8 L7.8 7.6 L8.1 11.3 L3.6 11.7 Z" fill="#3a3a3a"/><path d="M4.3 8.7 L7 8.5 L7.2 10.6 L4.5 10.8 Z" fill="#bbb"/><rect x="2.5" y="0" width="1.3" height="3" fill="#888"/><rect x="6.5" y="-0.3" width="1.3" height="3" fill="#888"/></svg>
<div class="t " style="left:430.5px;top:585.00px;font-size:12.8px;">Wartość</div>
<div class="a" style="left:490px;top:580px;width:132px;height:23px;border:1px solid #acacac;background:#fff"></div>
<div class="t" style="left:490px;top:584.00px;width:127.6px;text-align:right;font-size:14.1px">5 000,00</div>
<div class="t " style="left:627.6px;top:585.00px;font-size:12.8px;">PLN</div>
<div class="t " style="left:430.5px;top:670.00px;font-size:12.7px;">Termin pł.</div>
<div class="a" style="left:490px;top:664px;width:98px;height:23px;border:1px solid #e8e8e8;background:#fff"></div>
<div class="t " style="left:502.3px;top:670.00px;font-size:13px;">.</div>
<div class="t " style="left:513.8px;top:670.00px;font-size:13px;">.</div>
<div class="a" style="left:568px;top:665px;width:18px;height:22px;background:#fcfcfc;border:1px solid #d2d2d2;border-radius:4px"></div>
<svg class="a" style="left:571.5px;top:668.5px" width="12" height="15" viewBox="0 0 12 15"><path d="M0.5 2 L9.5 1 L10.8 13.5 L1.5 14.5 Z" fill="#5a5a5a"/><path d="M0.5 2 L9.5 1 L9.9 6 L0.9 6.8 Z" fill="#e0282c"/><path d="M1.1 6.8 L9.4 6 L9.9 12.2 L1.7 13 Z" fill="#f2f2f2"/><path d="M3.3 8 L7.8 7.6 L8.1 11.3 L3.6 11.7 Z" fill="#3a3a3a"/><path d="M4.3 8.7 L7 8.5 L7.2 10.6 L4.5 10.8 Z" fill="#bbb"/><rect x="2.5" y="0" width="1.3" height="3" fill="#888"/><rect x="6.5" y="-0.3" width="1.3" height="3" fill="#888"/></svg>
<div class="a" style="left:773px;top:665px;width:118px;height:22px;background:#fdfdfd;border:1px solid #c8c8c8;border-radius:4px"></div>
<div class="t " style="left:776px;top:670.00px;font-size:12.5px;"><span class="u">H</span>armonogram spłat</div>
<div class="a" style="left:485px;top:706px;width:136px;height:22px;background:#fdfdfd;border:1px solid #c6c6c6;border-radius:4px"></div>
<div class="a" style="left:627px;top:706px;width:88px;height:22px;background:#fdfdfd;border:1px solid #c6c6c6;border-radius:4px"></div>
<div class="a" style="left:721px;top:706px;width:88px;height:22px;background:#fdfdfd;border:1px solid #c6c6c6;border-radius:4px"></div>
<div class="a" style="left:815px;top:706px;width:88px;height:22px;background:#fdfdfd;border:1px solid #c6c6c6;border-radius:4px"></div>
<div class="t " style="left:493px;top:712.00px;font-size:12.1px;">Konto rozrachunkowe</div>
<div class="t " style="left:663px;top:712.00px;font-size:12.3px;"><span class="u">U</span>wagi</div>
<div class="t " style="left:756.3px;top:712.00px;font-size:12.4px;"><span class="u">D</span>rukuj</div>
<div class="t " style="left:860.6px;top:712.00px;font-size:12.3px;"><span class="u">O</span>K</div>
<svg class="a" style="left:645px;top:709px" width="14" height="14" viewBox="0 0 14 14"><path d="M1 0.5 H9 L9 13.5 H1 Z" fill="#dfe6ea" stroke="#c0c8cc" stroke-width=".8"/><path d="M5 12 L12.5 2.5" stroke="#9a8aa0" stroke-width="1.6"/></svg>
<svg class="a" style="left:737px;top:710px" width="14" height="13" viewBox="0 0 14 13"><path d="M7 0.5 L12 0.5 L12.3 5.5 L7 5.5 Z" fill="#262626"/><path d="M2 5.5 L12 4.5 L14 7 L14 11 L4.5 12.5 L2 9.5 Z" fill="#1c1c1c"/><path d="M3 6.5 L10 6 L10.5 7.5 L3.5 8 Z" fill="#4a4a4a"/><path d="M0 12 L2.5 8.8 L9.2 8.6 L8.3 12.8 Z" fill="#b4dcea"/><path d="M9.2 8.6 L11 8.2 L10.8 11.5 L8.6 12 Z" fill="#8a9ee0"/></svg>
<svg class="a" style="left:840px;top:710px" width="15" height="13" viewBox="0 0 15 13"><path d="M1 6.5 L4 4.5 L6 7.5 L12.5 1 L14.5 3 L6 12 Z" fill="url(#gc)"/></svg>
</body></html>
